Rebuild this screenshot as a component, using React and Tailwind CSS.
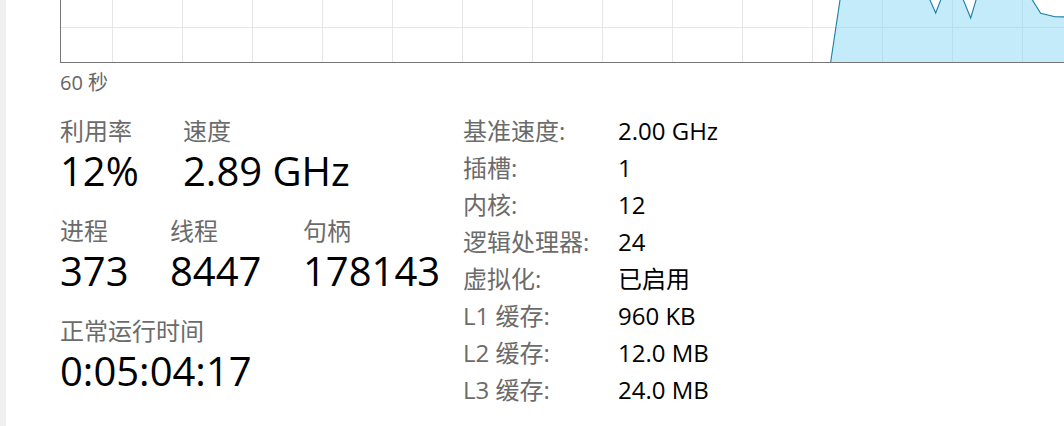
import React from "react";

function Chart() {
  const vx = [];
  for (let k = 0; k < 14; k++) vx.push(51.5 + 70 * k);
  const line =
    "769.7,62 779.6,-4 867.2,-4 874.7,13 881.2,-4 900.7,-4 909.7,18 916.2,-4 968.8,-4 979.7,13.3 994,16.7 1006,17";
  return (
    <div className="w-[1004px] h-[63px] border-l border-b border-[#767676] overflow-hidden">
      <svg width="1003" height="62" viewBox="0 0 1003 62" className="block">
        {vx.map((x) => (
          <line key={x} x1={x} y1={0} x2={x} y2={62} stroke="#e6e6e6" strokeWidth="1" />
        ))}
        <line x1={0} y1={27.5} x2={1003} y2={27.5} stroke="#e6e6e6" strokeWidth="1" />
        <polygon points={line + " 1006,64 769.7,64"} fill="rgb(130,213,242)" fillOpacity="0.48" />
        <polyline points={line} fill="none" stroke="#1b7fa5" strokeWidth="1.1" />
      </svg>
    </div>
  );
}

function Stat({ label, value, w }) {
  return (
    <div className={w}>
      <div className="text-[24px] leading-[32px] text-[#6b6b6b] whitespace-nowrap">{label}</div>
      <div className="text-[40px] leading-[48px] text-black whitespace-nowrap">{value}</div>
    </div>
  );
}

const details = [
  ["基准速度:", "2.00 GHz"],
  ["插槽:", "1"],
  ["内核:", "12"],
  ["逻辑处理器:", "24"],
  ["虚拟化:", "已启用"],
  ["L1 缓存:", "960 KB"],
  ["L2 缓存:", "12.0 MB"],
  ["L3 缓存:", "24.0 MB"],
];

export default function App() {
  return (
    <div className="w-[1064px] h-[426px] flex bg-white overflow-hidden font-['Open_Sans','Noto_Sans_CJK_SC',sans-serif]">
      <div className="w-[6px] shrink-0 bg-[#f0f0f0]" />
      <div className="flex-1 pl-[54px]">
        <Chart />
        <div className="mt-[6px] text-[20px] leading-[28px] text-[#666666]">60 秒</div>
        <div className="mt-[16px] flex items-start">
          <div className="w-[403px] shrink-0 pt-[2px] flex flex-col gap-[20px]">
            <div className="flex">
              <Stat w="w-[123px]" label="利用率" value="12%" />
              <Stat w="w-[200px]" label="速度" value="2.89 GHz" />
            </div>
            <div className="flex">
              <Stat w="w-[110px]" label="进程" value="373" />
              <Stat w="w-[133px]" label="线程" value="8447" />
              <Stat w="w-[150px]" label="句柄" value="178143" />
            </div>
            <div className="flex">
              <Stat w="w-[300px]" label="正常运行时间" value="0:05:04:17" />
            </div>
          </div>
          <div className="-mt-[1px] grid grid-cols-[155px_auto] text-[24px] leading-[37px]">
            {details.map(([k, v]) => (
              <React.Fragment key={k}>
                <div className="text-[#6b6b6b] whitespace-nowrap">{k}</div>
                <div className="text-black whitespace-nowrap">{v}</div>
              </React.Fragment>
            ))}
          </div>
        </div>
      </div>
    </div>
  );
}
